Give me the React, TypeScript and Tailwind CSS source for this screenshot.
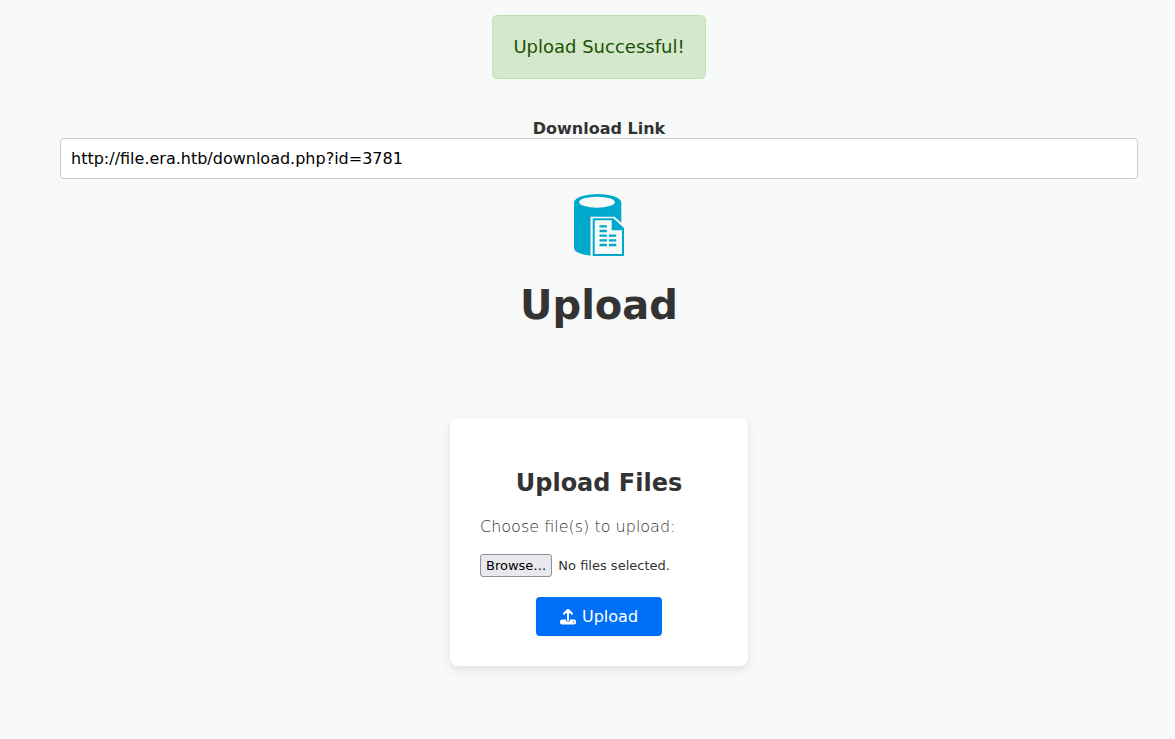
import { useRef, useState } from "react";

function StorageLogo() {
  return (
    <svg className="h-16 w-[52px]" viewBox="0 0 52 64" aria-hidden="true">
      <path
        d="M1 9.500C1 4.800 11.600 1 24.700 1S48.300 4.800 48.300 9.500V55c0 4.500-10.600 8-23.600 8S1 59.500 1 55Z"
        fill="#00a9cb"
      />
      <ellipse cx="24" cy="9.200" rx="17.800" ry="5.500" fill="#f8faf9" />
      <path d="M17.500 23.700H41.500L52 33V64H17.500Z" fill="#f8faf9" />
      <path d="M19.700 25.200H40.500L51 35V63H19.700Z" fill="#00a9cb" />
      <path d="M21.700 27.200h17V37.200h10.300v23.800h-27.300Z" fill="#f8faf9" />
      <path
        d="M26.500 33.300h7.300M26.500 38h7.300M26.500 42.700h7.300M36 42.700h7.300M26.500 47.300h7.300M36 47.300h7.300M26.500 52h7.300M36 52h7.300"
        stroke="#00a9cb"
        strokeWidth="2.300"
      />
    </svg>
  );
}

function UploadIcon() {
  return (
    <svg className="size-4" viewBox="0 0 16 16" fill="none" aria-hidden="true">
      <path
        d="M2 10.500h4v.5a1.500 1.500 0 0 0 1.500 1.500h1A1.500 1.500 0 0 0 10 11v-.5h4a2 2 0 0 1 2 2v1a2 2 0 0 1-2 2H2a2 2 0 0 1-2-2v-1a2 2 0 0 1 2-2Z"
        fill="currentColor"
      />
      <path
        d="M8 11V1M4 4.700l4-4 4 4"
        stroke="currentColor"
        strokeWidth="2"
        strokeLinecap="round"
        strokeLinejoin="round"
      />
      <circle cx="13.500" cy="13" r=".75" fill="#006ff7" />
    </svg>
  );
}

function UploadCard() {
  const picker = useRef<HTMLInputElement>(null);
  const [status, setStatus] = useState("No files selected.");

  return (
    <form
      className="flex w-[298px] max-w-full flex-col rounded-lg bg-white px-[30px] pt-[49px] pb-[30px] shadow-[0_4px_10px_rgba(0,0,0,0.1)]"
      onSubmit={(event) => event.preventDefault()}
    >
      <h2 className="text-center text-2xl font-bold">Upload Files</h2>
      <label htmlFor="files" className="mt-4 text-base font-extralight text-[#333]">
        Choose file(s) to upload:
      </label>
      <input
        ref={picker}
        id="files"
        type="file"
        multiple
        className="hidden"
        onChange={(event) => {
          const count = event.target.files?.length ?? 0;
          setStatus(count ? `${count} files selected.` : "No files selected.");
        }}
      />
      <div className="mt-[15px] flex items-center gap-1.5 text-[13px]">
        <button
          type="button"
          className="h-[23px] rounded-[3px] border border-[#8f8f9d] bg-[#e9e9ed] px-[5px] text-black"
          onClick={() => picker.current?.click()}
        >
          Browse…
        </button>
        <span>{status}</span>
      </div>
      <button
        type="submit"
        className="mt-5 flex h-[39px] items-center gap-1.5 self-center rounded bg-[#006ff7] px-6 text-base text-white"
      >
        <UploadIcon />
        Upload
      </button>
    </form>
  );
}

export default function App() {
  return (
    <main className="flex min-h-screen flex-col items-center bg-[#f8faf9] pt-[15px] pr-[37px] pb-16 pl-[60px] font-['DejaVu_Sans',sans-serif] text-[#333]">
      <p
        role="status"
        className="rounded-[5px] border border-[#c3e0b5] bg-[#d4e9cb] px-5 py-[17px] text-lg text-[#1b5208]"
      >
        Upload Successful!
      </p>
      <label htmlFor="link" className="mt-10 text-base leading-[19px] font-bold">
        Download Link
      </label>
      <input
        id="link"
        type="text"
        readOnly
        value="http://file.era.htb/download.php?id=3781"
        className="h-[41px] w-full rounded border border-[#ccc] bg-white px-2.5 text-base text-black"
      />
      <div className="mt-3.5 mb-[23px]">
        <StorageLogo />
      </div>
      <h1 className="mb-[88px] text-[40px] leading-[50px] font-bold">Upload</h1>
      <UploadCard />
    </main>
  );
}
